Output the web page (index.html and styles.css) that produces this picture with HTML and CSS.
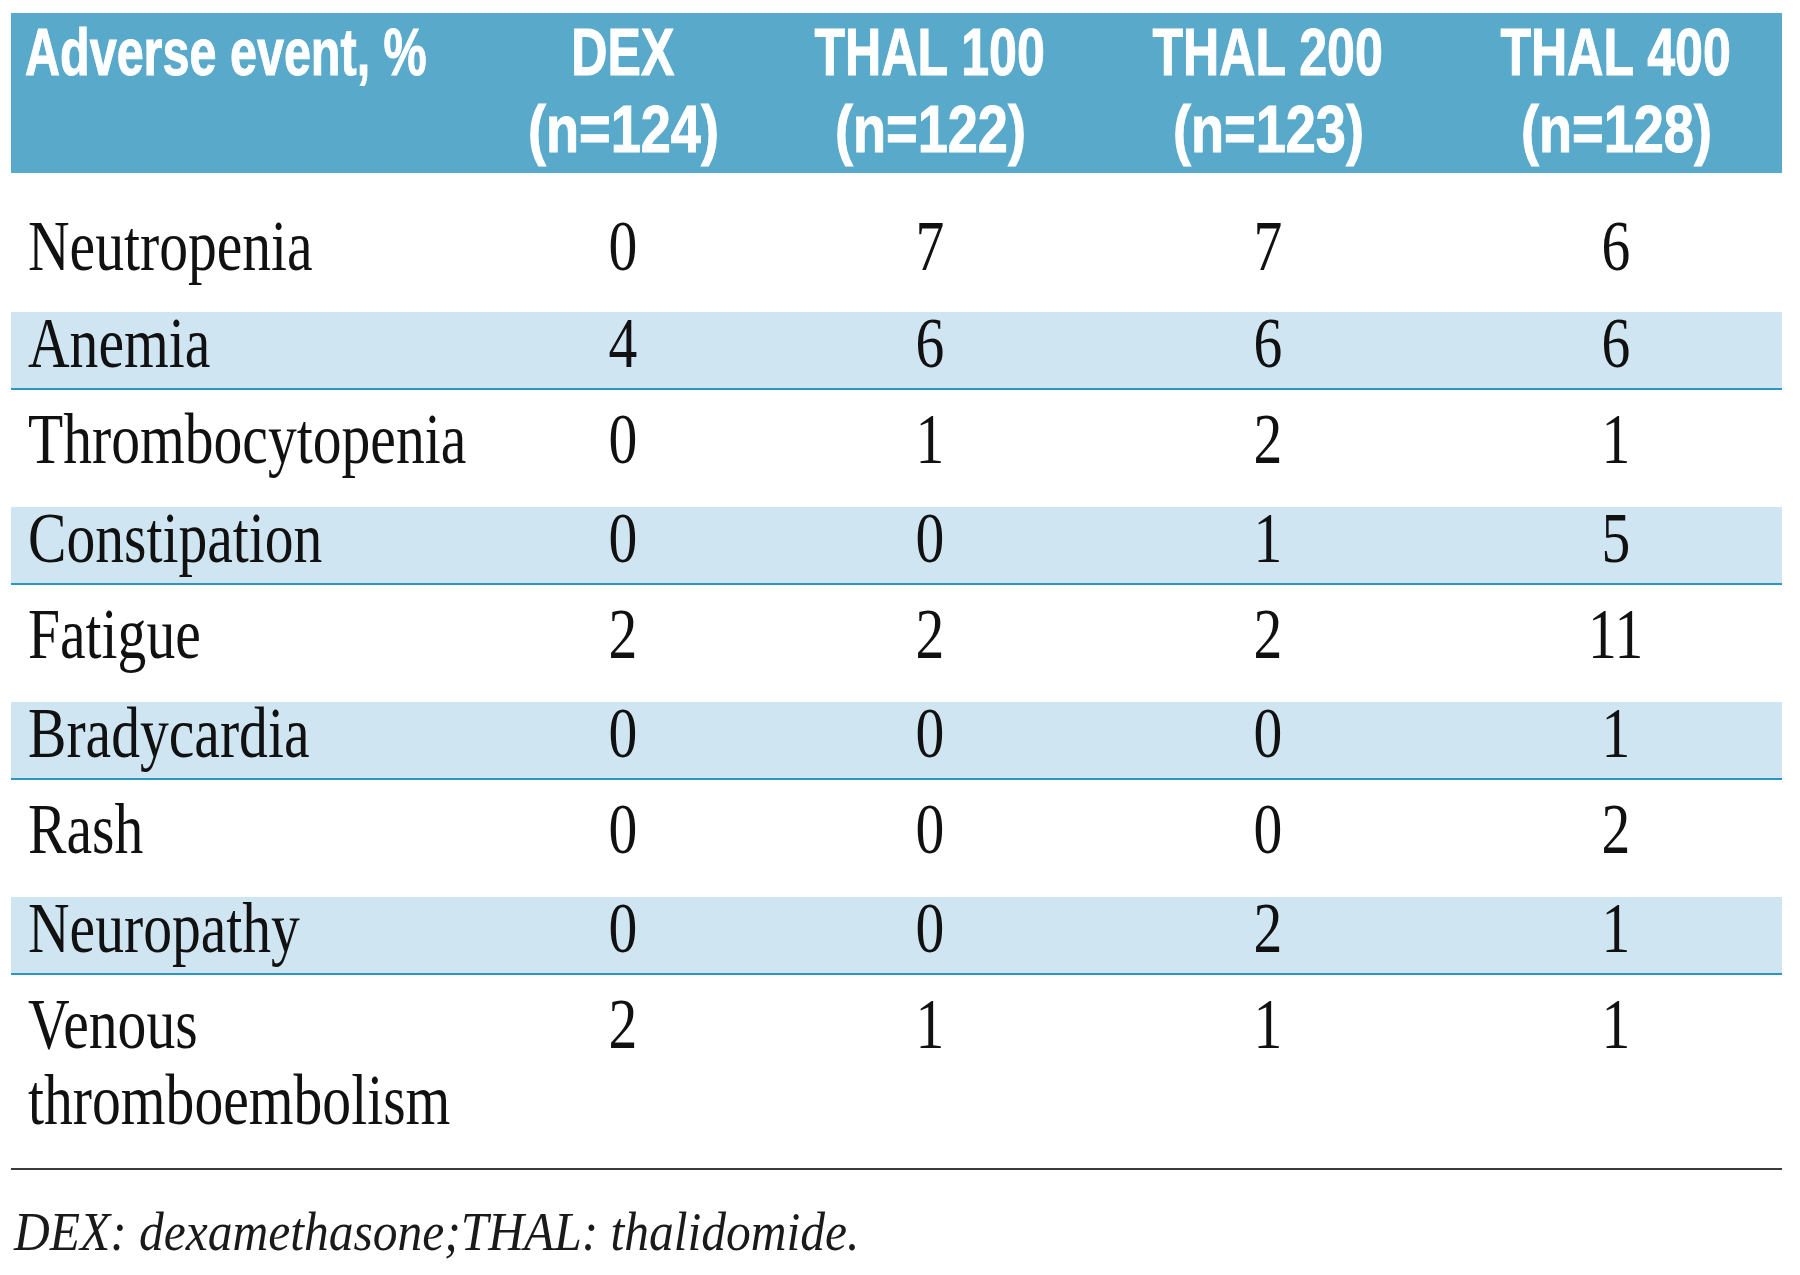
FILE: index.html
```html
<!DOCTYPE html>
<html lang="en">
<head>
<meta charset="utf-8">
<title>Adverse events</title>
<link rel="stylesheet" href="styles.css">
</head>
<body>
<div class="page">
  <div class="table">
    <div class="thead">
      <div class="hcell first"><span class="hx">Adverse event, %</span></div>
      <div class="hcell"><span class="hx">DEX</span><span class="hx n">(n=124)</span></div>
      <div class="hcell"><span class="hx">THAL 100</span><span class="hx n">(n=122)</span></div>
      <div class="hcell"><span class="hx">THAL 200</span><span class="hx n">(n=123)</span></div>
      <div class="hcell"><span class="hx">THAL 400</span><span class="hx n">(n=128)</span></div>
    </div>
    <div class="row top">
      <div class="label"><span class="lx">Neutropenia</span></div>
      <div class="num"><span class="nx">0</span></div>
      <div class="num"><span class="nx">7</span></div>
      <div class="num"><span class="nx">7</span></div>
      <div class="num"><span class="nx">6</span></div>
    </div>
    <div class="row s">
      <div class="label"><span class="lx">Anemia</span></div>
      <div class="num"><span class="nx">4</span></div>
      <div class="num"><span class="nx">6</span></div>
      <div class="num"><span class="nx">6</span></div>
      <div class="num"><span class="nx">6</span></div>
    </div>
    <div class="row w">
      <div class="label"><span class="lx">Thrombocytopenia</span></div>
      <div class="num"><span class="nx">0</span></div>
      <div class="num"><span class="nx">1</span></div>
      <div class="num"><span class="nx">2</span></div>
      <div class="num"><span class="nx">1</span></div>
    </div>
    <div class="row s">
      <div class="label"><span class="lx">Constipation</span></div>
      <div class="num"><span class="nx">0</span></div>
      <div class="num"><span class="nx">0</span></div>
      <div class="num"><span class="nx">1</span></div>
      <div class="num"><span class="nx">5</span></div>
    </div>
    <div class="row w">
      <div class="label"><span class="lx">Fatigue</span></div>
      <div class="num"><span class="nx">2</span></div>
      <div class="num"><span class="nx">2</span></div>
      <div class="num"><span class="nx">2</span></div>
      <div class="num"><span class="nx">11</span></div>
    </div>
    <div class="row s">
      <div class="label"><span class="lx">Bradycardia</span></div>
      <div class="num"><span class="nx">0</span></div>
      <div class="num"><span class="nx">0</span></div>
      <div class="num"><span class="nx">0</span></div>
      <div class="num"><span class="nx">1</span></div>
    </div>
    <div class="row w">
      <div class="label"><span class="lx">Rash</span></div>
      <div class="num"><span class="nx">0</span></div>
      <div class="num"><span class="nx">0</span></div>
      <div class="num"><span class="nx">0</span></div>
      <div class="num"><span class="nx">2</span></div>
    </div>
    <div class="row s">
      <div class="label"><span class="lx">Neuropathy</span></div>
      <div class="num"><span class="nx">0</span></div>
      <div class="num"><span class="nx">0</span></div>
      <div class="num"><span class="nx">2</span></div>
      <div class="num"><span class="nx">1</span></div>
    </div>
    <div class="row last">
      <div class="label"><span class="lx">Venous<br>thromboembolism</span></div>
      <div class="num"><span class="nx">2</span></div>
      <div class="num"><span class="nx">1</span></div>
      <div class="num"><span class="nx">1</span></div>
      <div class="num"><span class="nx">1</span></div>
    </div>
  </div>
  <p class="note"><span class="fx">DEX: dexamethasone;THAL: thalidomide.</span></p>
</div>
</body>
</html>
```
FILE: styles.css
```css
* {
  box-sizing: border-box;
}

body {
  margin: 0;
  background: #ffffff;
  color: #111111;
  font-family: "Liberation Serif", "Times New Roman", serif;
}

.page {
  width: 1800px;
  padding: 13px 18px 0 11px;
}

.table {
  width: 1771px;
}

.thead,
.row {
  display: grid;
  grid-template-columns: 461px 302px 312px 364px 332px;
}

.thead {
  height: 160px;
  padding-top: 1px;
  background: #59a9ca;
  color: #ffffff;
  font-family: "Liberation Sans", Arial, sans-serif;
  font-weight: 700;
  font-size: 66px;
  line-height: 77px;
  -webkit-text-stroke: 1px #ffffff;
}

.hcell {
  display: flex;
  flex-direction: column;
  align-items: center;
  white-space: nowrap;
}

.hcell.first {
  align-items: flex-start;
  padding-left: 14px;
}

.hx {
  display: block;
  transform: scaleX(0.76);
  transform-origin: center;
}

.hx.n {
  transform: scaleX(0.82);
}

.hcell.first .hx {
  transform: scaleX(0.735);
  transform-origin: left center;
}

.row {
  font-size: 72px;
  line-height: 62px;
  white-space: nowrap;
}

.row.top {
  padding: 42px 0 35px;
}

.row.w {
  padding: 18px 0 37px;
}

.row.s {
  padding: 0 0 14px;
  background: #cfe5f2;
  border-bottom: 2px solid #2b95c4;
}

.row.last {
  padding: 0 0 30px;
}

.label {
  padding-left: 17px;
}

.lx {
  display: inline-block;
  transform: scaleX(0.8);
  transform-origin: left center;
}

.num {
  display: flex;
  justify-content: center;
}

.nx {
  display: block;
  transform: scaleX(0.8);
}

.row.last .label {
  padding-top: 11px;
  line-height: 76px;
}

.row.last .num {
  padding-top: 18px;
}

.note {
  width: 1771px;
  margin: 0;
  padding: 31px 0 0 3px;
  border-top: 2px solid #3c3c3c;
  color: #1a1a1a;
  font-style: italic;
  font-size: 55px;
  line-height: 62px;
  white-space: nowrap;
}

.fx {
  display: inline-block;
  transform: scaleX(0.9);
  transform-origin: left center;
}
```
